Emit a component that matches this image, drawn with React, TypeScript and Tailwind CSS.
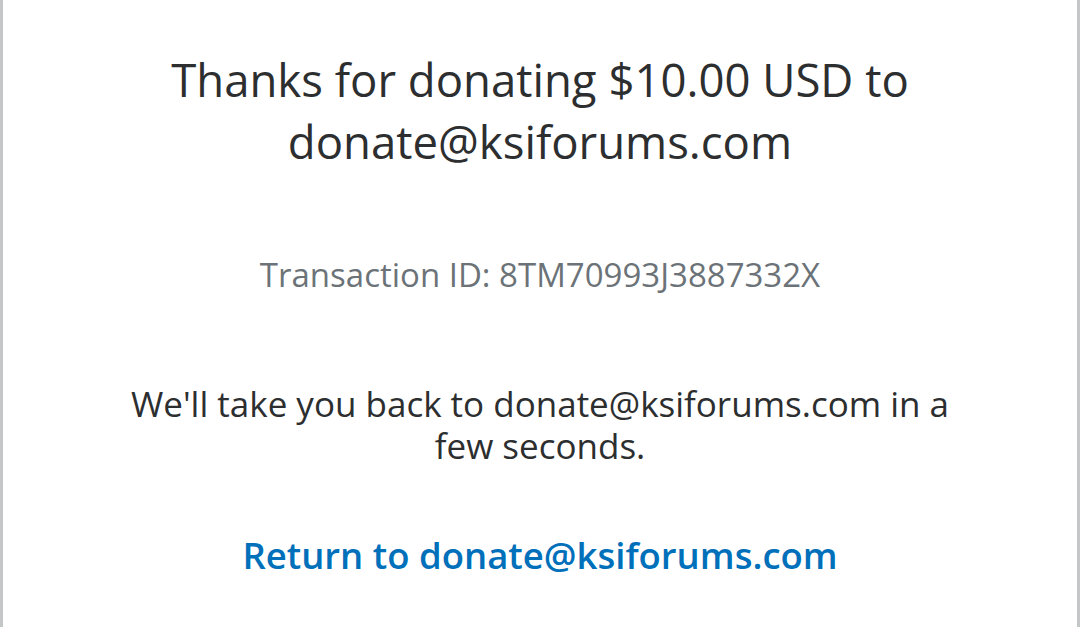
export default function App() {
  return (
    <div className="w-[1080px] h-[627px] overflow-hidden bg-white border-l-[3px] border-r-[3px] border-[#c4c7c8]">
      <div
        className="flex flex-col items-center text-center"
        style={{ fontFamily: '"Open Sans", "Noto Sans", sans-serif' }}
      >
        <h1 className="mt-[48px] text-[45.5px] leading-[62px] text-[#2c2e2f] w-[800px]">
          Thanks for donating $10.00 USD to donate@ksiforums.com
        </h1>
        <p className="mt-[83px] text-[33px] leading-[40px] text-[#6c7378]">
          Transaction ID: 8TM70993J3887332X
        </p>
        <p className="mt-[88px] text-[35px] leading-[42px] text-[#2c2e2f] w-[880px]">
          We'll take you back to donate@ksiforums.com in a few seconds.
        </p>
        <a className="mt-[66px] text-[36.5px] leading-[44px] font-semibold text-[#0070ba]">
          Return to donate@ksiforums.com
        </a>
      </div>
    </div>
  );
}
